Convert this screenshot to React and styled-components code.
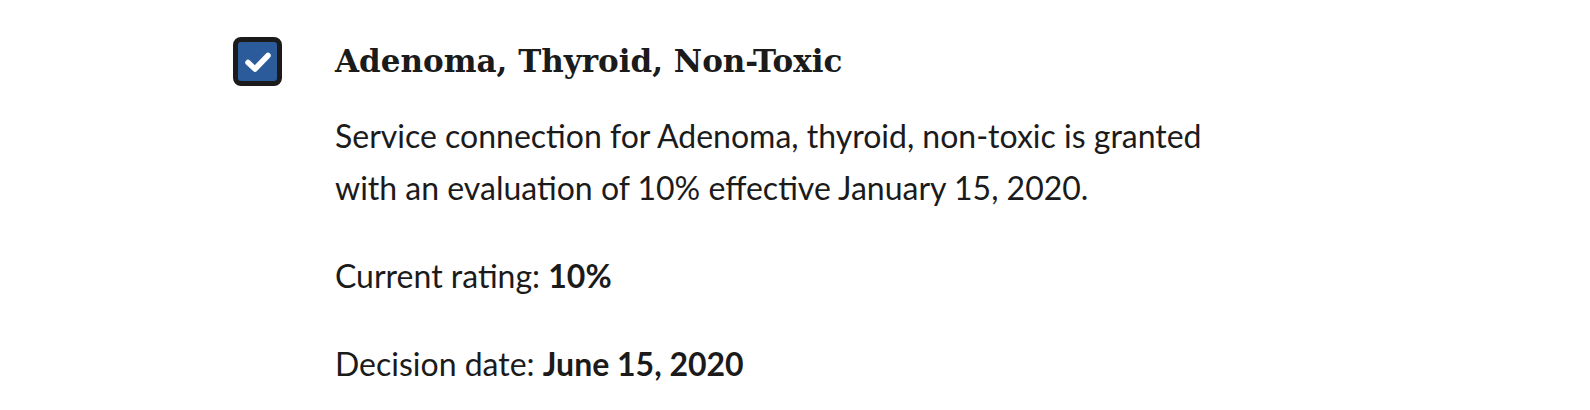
import styled, { createGlobalStyle } from 'styled-components';

const GlobalStyle = createGlobalStyle`
  body {
    margin: 0;
    background: #ffffff;
    color: #1b1b1b;
  }
`;

const Page = styled.div`
  display: flex;
  align-items: flex-start;
  gap: 53px;
  padding: 37px 0 0 233px;
`;

const CheckBox = styled.div`
  flex: none;
  width: 49px;
  height: 49px;
  box-sizing: border-box;
  border: 5px solid #1b1b1b;
  border-radius: 8px;
  background: ${({ checked }) => (checked ? '#2c5b9c' : '#ffffff')};
  display: flex;
  align-items: center;
  justify-content: center;
`;

const Content = styled.div`
  display: flex;
  flex-direction: column;
`;

const Title = styled.h3`
  margin: 6px 0 0;
  font-family: "DejaVu Serif", serif;
  font-weight: 700;
  font-size: 31px;
  letter-spacing: 0;
  line-height: 36px;
`;

const Paragraph = styled.p`
  margin: ${({ first }) => (first ? '31px' : '36px')} 0 0;
  font-family: Lato, "Liberation Sans", sans-serif;
  font-size: 32px;
  line-height: 52px;
  max-width: 900px;

  strong {
    font-weight: 700;
  }
`;

function Check() {
  return (
    <svg width="26" height="20" viewBox="0 0 26 20">
      <path
        d="M3 10.5 L10 17 L23 3.5"
        fill="none"
        stroke="#ffffff"
        strokeWidth="5.5"
        strokeLinecap="round"
        strokeLinejoin="round"
      />
    </svg>
  );
}

export default function App() {
  return (
    <>
      <GlobalStyle />
      <Page>
        <CheckBox checked>
          <Check />
        </CheckBox>
        <Content>
          <Title>Adenoma, Thyroid, Non-Toxic</Title>
          <Paragraph first>
            Service connection for Adenoma, thyroid, non-toxic is granted
            with an evaluation of 10% effective January 15, 2020.
          </Paragraph>
          <Paragraph>
            Current rating: <strong>10%</strong>
          </Paragraph>
          <Paragraph>
            Decision date: <strong>June 15, 2020</strong>
          </Paragraph>
        </Content>
      </Page>
    </>
  );
}
